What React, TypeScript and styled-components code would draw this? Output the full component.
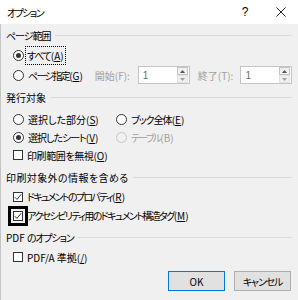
import styled, { createGlobalStyle } from "styled-components";

const GlobalStyle = createGlobalStyle`
  html, body {
    margin: 0;
    padding: 0;
    background: #f0f0f0;
  }
  * {
    box-sizing: border-box;
  }
`;

const Dialog = styled.div`
  width: 298px;
  height: 300px;
  display: flex;
  flex-direction: column;
  font-family: "Noto Sans CJK JP", "Noto Sans", sans-serif;
  font-size: 10px;
  font-feature-settings: "palt";
  color: #000;
  overflow: hidden;
`;

const TitleBar = styled.div`
  height: 24px;
  flex-shrink: 0;
  background: #fff;
  display: flex;
  align-items: center;
  padding-left: 7px;
`;

const Title = styled.span`
  flex: 1;
  letter-spacing: -1.6px;
`;

const HelpButton = styled.span`
  width: 14px;
  text-align: center;
  font-family: "Liberation Sans", sans-serif;
  font-size: 12px;
  margin-right: 23px;
`;

const CloseButton = styled.span`
  width: 12px;
  height: 12px;
  display: inline-flex;
  align-items: center;
  justify-content: center;
  margin-right: 11px;
`;

const Body = styled.div`
  flex: 1;
  background: #f0f0f0;
  border-left: 1px solid #c4c4c4;
  padding: 4px 4px 0 4px;
  display: flex;
  flex-direction: column;
`;

const Heading = styled.div<{ $top: number; $track?: number }>`
  height: 14px;
  margin-top: ${(p) => p.$top}px;
  display: flex;
  align-items: center;
  gap: 4px;
  white-space: pre;
  padding-left: 1px;

  & span {
    letter-spacing: ${(p) => p.$track ?? 0}px;
  }

  &::after {
    content: "";
    flex: 1;
    border-top: 1px solid #dcdcdc;
    margin-right: 2px;
  }
`;

const HeadingText = styled.div`
  display: flex;
  align-items: center;
`;

const List = styled.div<{ $top: number }>`
  margin-top: ${(p) => p.$top}px;
  display: flex;
  flex-direction: column;
`;

const Row = styled.div<{ $h: number }>`
  height: ${(p) => p.$h}px;
  display: flex;
  align-items: center;
  padding-left: 8px;
  white-space: nowrap;
`;

const Grid = styled.div`
  display: grid;
  grid-template-columns: 103px auto;
  align-items: center;
  width: 100%;
`;

const Option = styled.label<{ $disabled?: boolean }>`
  display: inline-flex;
  align-items: center;
  gap: 4px;
  color: ${(p) => (p.$disabled ? "#a0a0a0" : "#000")};
`;

const Radio = styled.span<{ $checked?: boolean; $disabled?: boolean }>`
  width: 11px;
  height: 11px;
  border-radius: 50%;
  border: 1px solid ${(p) => (p.$disabled ? "#c8c8c8" : "#333")};
  background: ${(p) => (p.$disabled ? "#f0f0f0" : "#fff")};
  display: inline-flex;
  align-items: center;
  justify-content: center;
  flex-shrink: 0;

  &::after {
    content: "";
    width: 5px;
    height: 5px;
    border-radius: 50%;
    background: #333;
    display: ${(p) => (p.$checked ? "block" : "none")};
  }
`;

const Box = styled.span<{ $focus?: boolean }>`
  width: 10px;
  height: 10px;
  border: 1px solid #333;
  background: #fff;
  display: inline-flex;
  align-items: center;
  justify-content: center;
  flex-shrink: 0;
  box-shadow: ${(p) => (p.$focus ? "0 0 0 2px #f0f0f0, 0 0 0 5px #000" : "none")};
`;

const Text = styled.span<{ $focus?: boolean }>`
  outline: ${(p) => (p.$focus ? "1px dotted #000" : "none")};
  padding: ${(p) => (p.$focus ? "1px 1px" : "0")};
  margin-left: ${(p) => (p.$focus ? "-2px" : "0")};
`;

const Tracked = styled.span<{ $track?: number }>`
  letter-spacing: ${(p) => p.$track ?? 0}px;
`;

const Key = styled.span<{ $plain?: boolean }>`
  text-decoration: ${(p) => (p.$plain ? "none" : "underline")};
  text-underline-offset: 1px;
`;

const Label = styled.span<{ $left: number; $right: number }>`
  color: #a0a0a0;
  margin-left: ${(p) => p.$left}px;
  margin-right: ${(p) => p.$right}px;
`;

const Spin = styled.div`
  width: 52px;
  height: 18px;
  border: 1px solid #c4c4c4;
  background: #fff;
  display: flex;
  align-items: center;
  padding: 0 1px 0 4px;
  flex-shrink: 0;
`;

const SpinValue = styled.span`
  flex: 1;
  color: #6d6d6d;
  font-family: "Liberation Sans", sans-serif;
  font-size: 10px;
`;

const SpinButtons = styled.div`
  width: 11px;
  height: 16px;
  display: flex;
  flex-direction: column;
`;

const SpinButton = styled.span<{ $faint?: boolean }>`
  flex: 1;
  border: 1px solid ${(p) => (p.$faint ? "#e2e2e2" : "#c4c4c4")};
  background: #f0f0f0;
  display: flex;
  align-items: center;
  justify-content: center;
`;

const Footer = styled.div`
  margin-top: 5px;
  display: flex;
  justify-content: flex-end;
  gap: 9px;
  padding-right: 3px;
`;

const Button = styled.button<{ $primary?: boolean; $track?: number }>`
  width: 57px;
  height: 20px;
  background: #e1e1e1;
  border: 1px solid ${(p) => (p.$primary ? "#0078d7" : "#adadad")};
  font-family: inherit;
  font-size: 10px;
  font-feature-settings: "palt";
  letter-spacing: ${(p) => p.$track ?? 0}px;
  color: #000;
  padding: 0;
`;

type CaptionProps = {
  text: string;
  k: string;
  focus?: boolean;
  track?: number;
  plain?: boolean;
};

const Caption = ({ text, k, focus, track, plain }: CaptionProps) => (
  <Text $focus={focus}>
    <Tracked $track={track}>{text}</Tracked>(<Key $plain={plain}>{k}</Key>)
  </Text>
);

const Check = () => (
  <svg width="8" height="8" viewBox="0 0 8 8">
    <path d="M0.8 4.2 L3 6.4 L7.2 1.2" fill="none" stroke="#333" strokeWidth="1" />
  </svg>
);

const Arrow = ({ up, color }: { up?: boolean; color: string }) => (
  <svg width="5" height="3" viewBox="0 0 5 3">
    <path d={up ? "M0 3 L2.5 0 L5 3 Z" : "M0 0 L5 0 L2.5 3 Z"} fill={color} />
  </svg>
);

const SpinBox = ({ value }: { value: string }) => (
  <Spin>
    <SpinValue>{value}</SpinValue>
    <SpinButtons>
      <SpinButton>
        <Arrow up color="#555" />
      </SpinButton>
      <SpinButton $faint>
        <Arrow color="#a0a0a0" />
      </SpinButton>
    </SpinButtons>
  </Spin>
);

const App = () => {
  return (
    <>
      <GlobalStyle />
      <Dialog>
        <TitleBar>
          <Title>オプション</Title>
          <HelpButton>?</HelpButton>
          <CloseButton>
            <svg width="10" height="10" viewBox="0 0 10 10">
              <path d="M0.5 0.5 L9.5 9.5 M9.5 0.5 L0.5 9.5" stroke="#222" strokeWidth="1" />
            </svg>
          </CloseButton>
        </TitleBar>
        <Body>
          <Heading $top={0} $track={-1}>
            <span>ページ範囲</span>
          </Heading>
          <List $top={3}>
            <Row $h={20}>
              <Option>
                <Radio $checked />
                <Caption text="すべて" k="A" focus track={-1.2} />
              </Option>
            </Row>
            <Row $h={20}>
              <Option>
                <Radio />
                <Caption text="ページ指定" k="G" track={-1.7} />
              </Option>
              <Label $left={12} $right={8}>
                開始(F):
              </Label>
              <SpinBox value="1" />
              <Label $left={8} $right={7}>
                終了(T):
              </Label>
              <SpinBox value="1" />
            </Row>
          </List>

          <Heading $top={5}>
            <span>発行対象</span>
          </Heading>
          <List $top={6}>
            <Row $h={18}>
              <Grid>
                <Option>
                  <Radio />
                  <Caption text="選択した部分" k="S" />
                </Option>
                <Option>
                  <Radio />
                  <Caption text="ブック全体" k="E" track={-1} />
                </Option>
              </Grid>
            </Row>
            <Row $h={18}>
              <Grid>
                <Option>
                  <Radio $checked />
                  <Caption text="選択したシート" k="V" track={-1} />
                </Option>
                <Option $disabled>
                  <Radio $disabled />
                  <Caption text="テーブル" k="B" plain track={-1.8} />
                </Option>
              </Grid>
            </Row>
            <Row $h={18}>
              <Option>
                <Box />
                <Caption text="印刷範囲を無視" k="O" track={-0.4} />
              </Option>
            </Row>
          </List>

          <Heading $top={6} $track={0.4}>
            <span>印刷対象外の情報を含める</span>
          </Heading>
          <List $top={3}>
            <Row $h={19}>
              <Option>
                <Box>
                  <Check />
                </Box>
                <Caption text="ドキュメントのプロパティ" k="R" track={-1.7} />
              </Option>
            </Row>
            <Row $h={19}>
              <Option>
                <Box $focus>
                  <Check />
                </Box>
                <Caption text="アクセシビリティ用のドキュメント構造タグ" k="M" track={-1.6} />
              </Option>
            </Row>
          </List>

          <Heading $top={5} $track={-1.2}>
            <HeadingText>
              PDF <span>のオプション</span>
            </HeadingText>
          </Heading>
          <List $top={4}>
            <Row $h={18}>
              <Option>
                <Box />
                <Caption text="PDF/A 準拠" k="/" />
              </Option>
            </Row>
          </List>

          <Footer>
            <Button $primary>OK</Button>
            <Button $track={-1.2}>キャンセル</Button>
          </Footer>
        </Body>
      </Dialog>
    </>
  );
};

export default App;
